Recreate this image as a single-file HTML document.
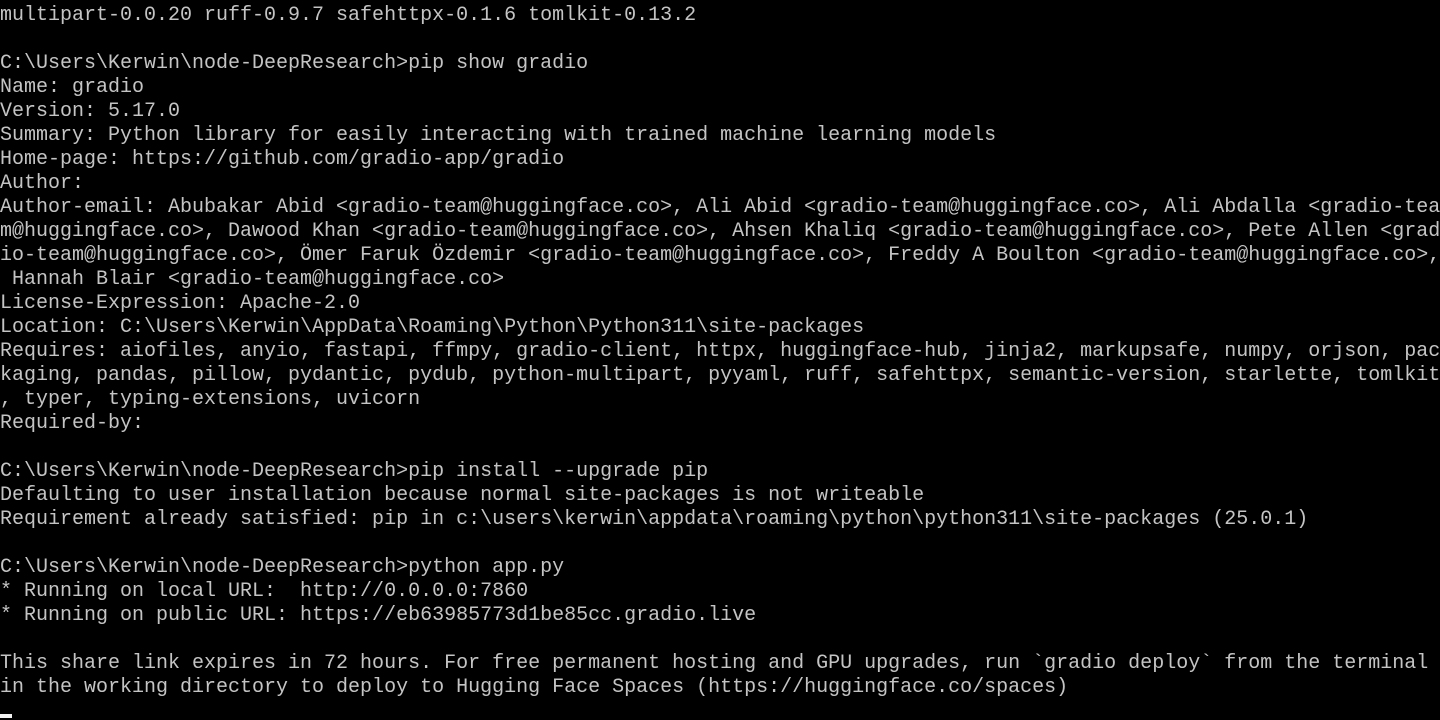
<!DOCTYPE html>
<html><head><meta charset="utf-8"><style>
html,body{margin:0;padding:0;background:#000;width:1440px;height:720px;overflow:hidden}
pre{margin:0;padding-top:4px;font-family:"Liberation Mono","Noto Sans CJK SC",monospace;font-size:20px;line-height:24px;color:#c4c4c4;white-space:pre;letter-spacing:0}
.cur{display:inline-block;width:12px;height:4px;background:#f2f2f2;vertical-align:-2px}
</style></head><body><pre>multipart-0.0.20 ruff-0.9.7 safehttpx-0.1.6 tomlkit-0.13.2

C:\Users\Kerwin\node-DeepResearch&gt;pip show gradio
Name: gradio
Version: 5.17.0
Summary: Python library for easily interacting with trained machine learning models
Home-page: https://github.com/gradio-app/gradio
Author:
Author-email: Abubakar Abid &lt;gradio-team@huggingface.co&gt;, Ali Abid &lt;gradio-team@huggingface.co&gt;, Ali Abdalla &lt;gradio-tea
m@huggingface.co&gt;, Dawood Khan &lt;gradio-team@huggingface.co&gt;, Ahsen Khaliq &lt;gradio-team@huggingface.co&gt;, Pete Allen &lt;grad
io-team@huggingface.co&gt;, Ömer Faruk Özdemir &lt;gradio-team@huggingface.co&gt;, Freddy A Boulton &lt;gradio-team@huggingface.co&gt;,
 Hannah Blair &lt;gradio-team@huggingface.co&gt;
License-Expression: Apache-2.0
Location: C:\Users\Kerwin\AppData\Roaming\Python\Python311\site-packages
Requires: aiofiles, anyio, fastapi, ffmpy, gradio-client, httpx, huggingface-hub, jinja2, markupsafe, numpy, orjson, pac
kaging, pandas, pillow, pydantic, pydub, python-multipart, pyyaml, ruff, safehttpx, semantic-version, starlette, tomlkit
, typer, typing-extensions, uvicorn
Required-by:

C:\Users\Kerwin\node-DeepResearch&gt;pip install --upgrade pip
Defaulting to user installation because normal site-packages is not writeable
Requirement already satisfied: pip in c:\users\kerwin\appdata\roaming\python\python311\site-packages (25.0.1)

C:\Users\Kerwin\node-DeepResearch&gt;python app.py
* Running on local URL:  http://0.0.0.0:7860
* Running on public URL: https://eb63985773d1be85cc.gradio.live

This share link expires in 72 hours. For free permanent hosting and GPU upgrades, run `gradio deploy` from the terminal
in the working directory to deploy to Hugging Face Spaces (https://huggingface.co/spaces)
<span class="cur"></span></pre></body></html>
